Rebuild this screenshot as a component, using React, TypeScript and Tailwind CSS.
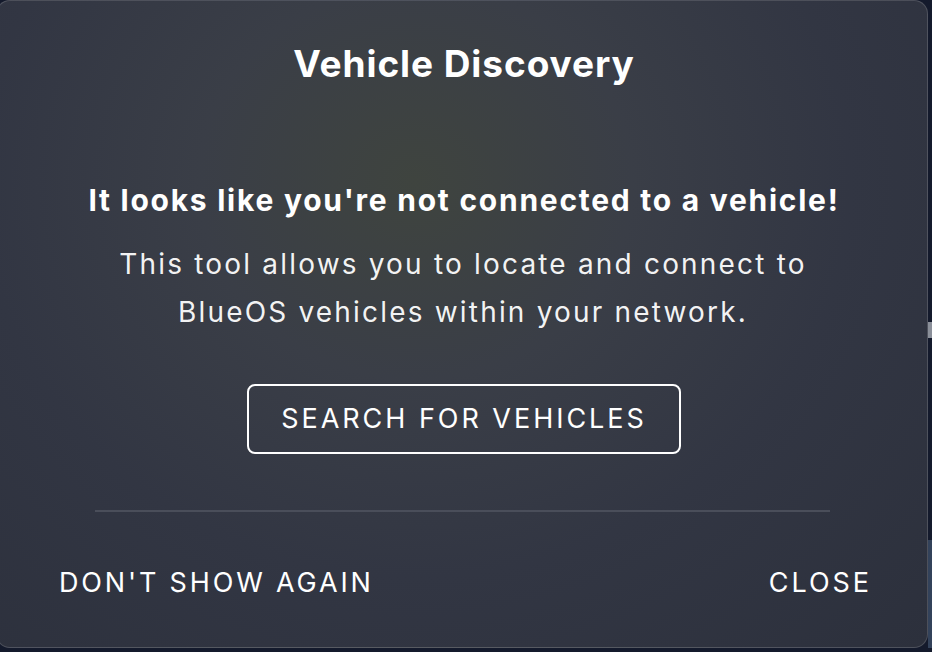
import React from "react";

export default function App() {
  return (
    <div className="relative w-[932px] h-[652px] overflow-hidden bg-[#141a2c]">
      <div className="absolute right-0 top-[322px] w-[4px] h-[16px] bg-[#8a8f99]" />
      <div className="absolute right-0 top-[540px] w-[4px] h-[108px] bg-[#33425a]" />
      <div
        className="absolute left-[-4px] top-0 w-[932px] h-[648px] rounded-[14px] border border-white/15 flex flex-col items-center text-white bg-[radial-gradient(ellipse_at_45%_28%,#3f443f_0%,#3a3e47_30%,#323643_60%,#2c303c_100%)]"
        style={{ fontFamily: "Inter, 'Noto Sans', sans-serif" }}
      >
        <h1 className="mt-[39px] text-[37px] leading-[48px] font-bold tracking-[0.025em] ml-[4px]">
          Vehicle Discovery
        </h1>
        <p className="mt-[94px] text-[30px] leading-[36px] font-bold tracking-[0.058em] ml-[4px]">
          It looks like you're not connected to a vehicle!
        </p>
        <p className="mt-[22px] text-[28px] leading-[48px] text-center text-white/95 tracking-[0.078em] ml-[2px]">
          This tool allows you to locate and connect to
          <br />
          BlueOS vehicles within your network.
        </p>
        <button className="mt-[48px] ml-[4px] w-[434px] h-[70px] rounded-[8px] border-2 border-white text-[27px] tracking-[0.11em] text-white">
          SEARCH FOR VEHICLES
        </button>
        <div className="mt-[56px] w-[735px] h-[2px] bg-[#4a4e5a]" />
        <div className="mt-[53px] w-full flex justify-between pl-[62px] pr-[55px] leading-[36px]">
          <button className="text-[27px] tracking-[0.105em] text-white">DON'T SHOW AGAIN</button>
          <button className="text-[27px] tracking-[0.11em] text-white">CLOSE</button>
        </div>
      </div>
    </div>
  );
}
